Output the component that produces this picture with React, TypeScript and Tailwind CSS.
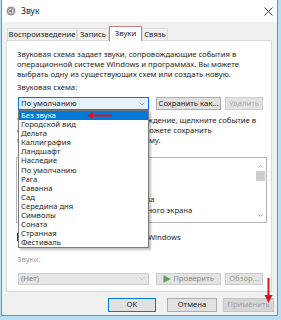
import { ChevronDown, ChevronUp } from "lucide-react";

const schemes = [
  "Без звука",
  "Городской вид",
  "Дельта",
  "Каллиграфия",
  "Ландшафт",
  "Наследие",
  "По умолчанию",
  "Рага",
  "Саванна",
  "Сад",
  "Середина дня",
  "Символы",
  "Соната",
  "Странная",
  "Фестиваль",
];

const events = [
  { text: "Windows", indent: false },
  { text: "Восклицание", indent: true },
  { text: "Всплывающее меню", indent: true },
  { text: "Критическая остановка задачка", indent: true },
  { text: "Выход из режима полноэкранного экрана", indent: true },
];

const tabs = [
  { label: "Воспроизведение", w: "w-[70px]" },
  { label: "Запись", w: "w-[32px]" },
  { label: "Звуки", w: "w-[33px]", active: true },
  { label: "Связь", w: "w-[26px]" },
];

function SpeakerIcon() {
  return (
    <svg width="10" height="10" viewBox="0 0 10 10">
      <circle cx="5" cy="5" r="4.5" fill="#9a9a9a" />
      <circle cx="5" cy="5" r="2.6" fill="#d6d6d6" />
      <path d="M3.3 4.2h1.1l1.4-1.1v3.8L4.4 5.8H3.3z" fill="#6f6f6f" />
    </svg>
  );
}

export default function App() {
  return (
    <div className="relative w-[281px] h-[320px] overflow-hidden bg-[#b9dff2] font-['Noto_Sans',sans-serif] text-[7.7px] text-[#1e1e1e]">
      <div className="ml-px w-[277px] h-[316px] border border-t-0 border-[#4b9bd6] bg-[#f0f0f0] flex flex-col">
        {/* title bar */}
        <div className="h-[22px] shrink-0 bg-white flex items-center pl-[4px] pr-[4px]">
          <SpeakerIcon />
          <span className="ml-[5px] text-[8.5px] text-[#222]">Звук</span>
          <svg className="ml-auto" width="9" height="9" viewBox="0 0 9 9">
            <path d="M0.5 0.5L8.5 8.5M8.5 0.5L0.5 8.5" stroke="#2b2b2b" strokeWidth="0.9" />
          </svg>
        </div>

        {/* tabs */}
        <div className="h-[18px] shrink-0 flex items-end pl-[5px]">
          {tabs.map((t) =>
            t.active ? (
              <div
                key={t.label}
                className={`${t.w} h-[15px] -mb-px relative z-10 bg-white border border-b-0 border-[#cc7a82] flex items-center justify-center leading-none whitespace-nowrap`}
              >
                {t.label}
              </div>
            ) : (
              <div
                key={t.label}
                className={`${t.w} h-[12px] bg-[#f0f0f0] border border-b-0 border-[#d9d9d9] flex items-center justify-center leading-none whitespace-nowrap`}
              >
                {t.label}
              </div>
            )
          )}
        </div>

        {/* panel */}
        <div className="ml-[4px] w-[266px] h-[252px] shrink-0 bg-white border border-[#d9d9d9]">
          <div className="pt-[8px] pl-[10px]">
            <p className="leading-[10px] whitespace-nowrap">
              Звуковая схема задает звуки, сопровождающие события в
              <br />
              операционной системе Windows и программах. Вы можете
              <br />
              выбрать одну из существующих схем или создать новую.
            </p>
            <div className="mt-[3px] leading-[10px]">Звуковая схема:</div>

            <div className="mt-[5px] ml-px flex h-[13px]">
              <div className="relative w-[131px] h-full">
                <div className="h-full border border-[#0078d7] bg-[#e5f1fb] flex items-center pl-[2px] pr-[2px]">
                  <span className="leading-none">По умолчанию</span>
                  <ChevronDown className="ml-auto w-[8px] h-[8px] text-[#555]" strokeWidth={1.5} />
                </div>
                {/* open list */}
                <div className="absolute left-0 top-[13px] z-20 w-[131px] h-[138px] bg-white border border-[#7a7a7a] shadow-[2px_2px_2px_rgba(0,0,0,0.25)]">
                  {schemes.map((s, i) => (
                    <div
                      key={s}
                      className={
                        i === 0
                          ? "h-[9.1px] leading-[9.1px] pl-[2px] bg-[#0078d7] text-white relative"
                          : "h-[9.1px] leading-[9.1px] pl-[2px]"
                      }
                    >
                      {s}
                      {i === 0 && (
                        <svg className="absolute left-[68px] top-[1px]" width="25" height="7" viewBox="0 0 25 7">
                          <path d="M5 3.5H25" stroke="#e01626" strokeWidth="2" />
                          <path d="M0 3.5L6 0.3V6.7z" fill="#e01626" />
                        </svg>
                      )}
                    </div>
                  ))}
                </div>
              </div>
              <div className="ml-[7px] w-[65px] h-full bg-[#e1e1e1] border border-[#adadad] flex items-center justify-center leading-none whitespace-nowrap">
                Сохранить как...
              </div>
              <div className="ml-[4px] w-[38px] h-full bg-[#e3e3e3] border border-[#cfcfcf] flex items-center justify-center leading-none text-[#a8a8a8]">
                Удалить
              </div>
            </div>

            <p className="mt-[5px] leading-[10px] whitespace-nowrap">
              Чтобы изменить звуковое сопровождение, щелкните событие в
              <br />
              списке ниже и выберите звук. Вы можете сохранить
              <br />
              изменения как новую звуковую схему.
            </p>

            {/* events */}
            <div className="mt-[12px] -ml-px w-[251px] h-[66px] border border-[#b4b4b4] flex">
              <div className="flex-1 pt-[3px]">
                {events.map((e) => (
                  <div
                    key={e.text}
                    className={e.indent ? "h-[11px] leading-[11px] pl-[18px] whitespace-nowrap" : "h-[11px] leading-[11px] pl-[4px] whitespace-nowrap"}
                  >
                    {e.text}
                  </div>
                ))}
              </div>
              <div className="w-[11px] flex flex-col items-center pt-[5px]">
                <ChevronUp className="w-[7px] h-[7px] text-[#606060]" strokeWidth={2} />
                <div className="mt-[1px] w-[9px] h-[10px] bg-[#cdcdcd]" />
                <ChevronDown className="mt-auto mb-[3px] w-[7px] h-[7px] text-[#606060]" strokeWidth={2} />
              </div>
            </div>

            <div className="mt-[9px] flex items-center h-[10px]">
              <div className="w-[8px] h-[8px] border border-[#333] bg-white" />
              <span className="ml-[4px] leading-[10px]">Проигрывать мелодию запуска Windows</span>
            </div>

            <div className="mt-[12px] leading-[10px] text-[#a0a0a0]">Звуки:</div>

            <div className="mt-[9px] ml-px flex h-[12px]">
              <div className="w-[131px] h-full bg-[#e6e6e6] border border-[#cccccc] flex items-center pl-[2px] pr-[2px] text-[#7a7a7a]">
                <span className="leading-none">(Нет)</span>
                <ChevronDown className="ml-auto w-[8px] h-[8px] text-[#b0b0b0]" strokeWidth={1.5} />
              </div>
              <div className="ml-[7px] w-[65px] h-full bg-[#e3e3e3] border border-[#cccccc] flex items-center justify-center leading-none text-[#8c8c8c]">
                <svg width="8" height="8" viewBox="0 0 8 8" className="mr-[2px]">
                  <path d="M0.5 0.3L7.8 4L0.5 7.7z" fill="#5aa35a" />
                </svg>
                Проверить
              </div>
              <div className="ml-[4px] w-[38px] h-full bg-[#e3e3e3] border border-[#cccccc] flex items-center justify-center leading-none text-[#9a9a9a]">
                Обзор...
              </div>
            </div>
          </div>
        </div>

        {/* footer */}
        <div className="mt-[6px] flex h-[14px] pl-[106px]">
          <div className="w-[48px] h-full bg-[#e1e1e1] border border-[#0078d7] flex items-center justify-center leading-none">
            OK
          </div>
          <div className="ml-[11px] w-[50px] h-full bg-[#e1e1e1] border border-[#adadad] flex items-center justify-center leading-none">
            Отмена
          </div>
          <div className="ml-[6px] w-[51px] h-full bg-[#d6d6d6] border border-[#c4c4c4] flex items-center justify-center leading-none text-[#a2a2a2]">
            Применить
          </div>
        </div>
      </div>

      {/* annotation arrow */}
      <svg className="absolute left-[264px] top-[278px]" width="9" height="25" viewBox="0 0 9 25">
        <path d="M4.5 0V18" stroke="#d8121f" strokeWidth="2" />
        <path d="M0.5 17L8.5 17L4.5 25z" fill="#d8121f" />
      </svg>
    </div>
  );
}
